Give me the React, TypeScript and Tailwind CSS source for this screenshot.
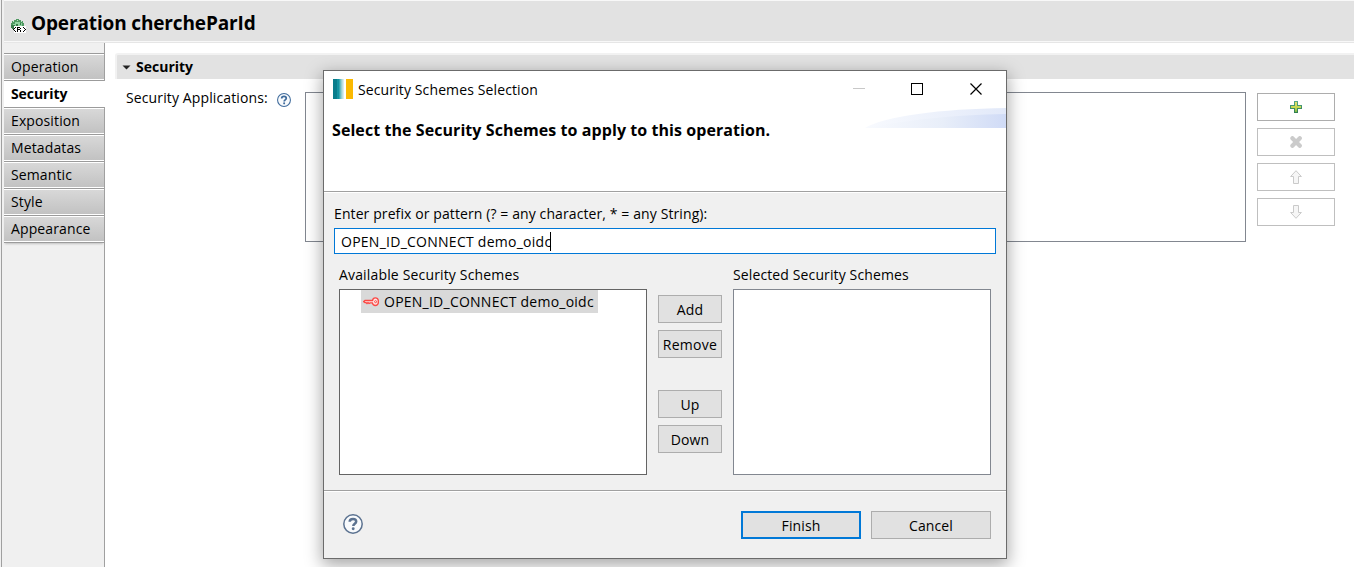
import React from "react";

const tabs = ["Operation", "Security", "Exposition", "Metadatas", "Semantic", "Style", "Appearance"];

function OperationIcon() {
  return (
    <svg width="15" height="15" viewBox="0 0 15 15" shapeRendering="crispEdges" className="block">
      <path d="M5 0h3v1h2v1h2v2h1v3h1v2H0V7H0V4h1V2h2V1h2z" fill="#4f9a62" />
      <path d="M4 3h5v1h2v3H2V5h2z" fill="#8fd3a0" />
      <path d="M0 6h4v5H2v-1H1V9H0zM5 5h2v2H5zM9 4h1v2H9z" fill="#3a7d4c" />
      <path d="M2 2h1v1H2zM6 1h1v1H6zM10 2h1v1h-1z" fill="#bfe5c8" />
      <path d="M3 7h12v7H3z" fill="#fff" />
      <path d="M4 8h1v1H4zM3 9h1v1H3zM2 10h1v1H2zM3 11h1v1H3zM4 12h1v1H4z" fill="#000" />
      <path d="M12 8h1v1h-1zM13 9h1v1h-1zM14 10h1v1h-1zM13 11h1v1h-1zM12 12h1v1h-1z" fill="#000" />
      <path d="M6 8h3v1H6zM6 8h1v5H6zM9 9h1v1H9zM7 10h2v1H7zM9 11h1v2H9z" fill="#000" />
    </svg>
  );
}

function HelpIcon({ size, color }: { size: number; color: string }) {
  return (
    <svg width={size} height={size} viewBox="0 0 20 20" className="block">
      <circle cx="10" cy="10" r="9.2" fill="#f8fafc" stroke={color} strokeWidth="1.5" />
      <path
        d="M6.7 7.7C6.7 5.7 8.1 4.9 10 4.9s3.2 1 3.2 2.700c0 2.300-2.900 2.200-2.900 4.500"
        fill="none"
        stroke={color}
        strokeWidth="2.5"
      />
      <circle cx="10.2" cy="14.800" r="1.450" fill={color} />
    </svg>
  );
}

function PlusIcon() {
  return (
    <svg width="12" height="12" viewBox="0 0 12 12" shapeRendering="crispEdges">
      <defs>
        <linearGradient id="plusEdge" x1="0" y1="0" x2="0" y2="1">
          <stop offset="0" stopColor="#55a98a" />
          <stop offset="1" stopColor="#2f7d4f" />
        </linearGradient>
        <linearGradient id="plusFill" x1="0" y1="0" x2="0" y2="1">
          <stop offset="0" stopColor="#e0e070" />
          <stop offset="0.55" stopColor="#c5d850" />
          <stop offset="1" stopColor="#7cb648" />
        </linearGradient>
      </defs>
      <path d="M4 0h4v4h4v4H8v4H4V8H0V4h4z" fill="url(#plusEdge)" />
      <path d="M5 1h2v4h4v2H7v4H5V7H1V5h4z" fill="url(#plusFill)" />
    </svg>
  );
}

function CrossIcon() {
  return (
    <svg width="12" height="12" viewBox="0 0 12 12">
      <path d="M2.400 2.200l7.400 7.600M9.800 2.200L2.400 9.800" stroke="#cbcbcb" strokeWidth="4.200" strokeLinecap="round" />
    </svg>
  );
}

function ArrowIcon({ down = false }: { down?: boolean }) {
  return (
    <svg width="12" height="14" viewBox="0 0 12 14" className={down ? "rotate-180" : ""}>
      <path d="M6 .7L11.400 6.500H8.500V13.500H3.500V6.500H.6z" fill="#f6f6f6" stroke="#cacaca" strokeWidth="1" />
    </svg>
  );
}

function KeyIcon() {
  return (
    <svg width="16" height="10" viewBox="0 0 16 10" className="block">
      <path
        d="M9.500 3.500H2L.7 4.600 2 5.600h1l1 .9 1-.9 1 .9 1.200-.6h2.100c.4 1.700 1.500 2.600 3 2.600 1.900 0 3.100-1.600 3.100-3.700S14.200 .9 12.300 .9c-1.500 0-2.500 1-2.800 2.600z"
        fill="#ffe3e3"
        stroke="#fb4844"
        strokeWidth="1.400"
      />
      <circle cx="12.600" cy="4.700" r="1" fill="#fff" stroke="#fb4844" strokeWidth="1" />
    </svg>
  );
}

function Logo() {
  return (
    <div className="flex h-5 w-5 overflow-hidden">
      <div className="w-1 bg-[#097d8c]" />
      <div className="w-0.5 bg-[#1493a1]" />
      <div className="w-px bg-[#3ba7b2]" />
      <div className="w-px bg-[#6bbcc4]" />
      <div className="w-px bg-[#97cfd4]" />
      <div className="w-px bg-[#badfe2]" />
      <div className="w-px bg-[#d8edee]" />
      <div className="w-0.5 bg-white" />
      <div className="w-[7px] bg-[#fbb900]" />
    </div>
  );
}

function Tab({ label, active, joined }: { label: string; active: boolean; joined: boolean }) {
  if (active) {
    return (
      <div className="h-[26px] w-[101px] bg-white pl-[7px] font-bold leading-[26px] tracking-[-0.1px] [word-spacing:0]">
        {label}
      </div>
    );
  }
  return (
    <div className={"h-7 border-y border-[#9b9b9b] " + (joined ? "-mt-px" : "")}>
      <div className="h-full border-y border-white bg-linear-to-b from-[#d8d8d8] to-[#c2c2c2] pl-[7px] leading-[23px]">
        {label}
      </div>
    </div>
  );
}

function SideButton({ children, muted }: { children: React.ReactNode; muted?: boolean }) {
  return (
    <button
      className={
        "flex h-7 w-[78px] items-center justify-center border bg-white " +
        (muted ? "border-[#bfbfbf]" : "border-[#adadad]")
      }
    >
      {children}
    </button>
  );
}

function Button({ children, className }: { children: React.ReactNode; className: string }) {
  return (
    <button className={"flex h-7 items-center justify-center bg-[#e1e1e1] pt-px whitespace-nowrap " + className}>
      {children}
    </button>
  );
}

function Dialog() {
  return (
    <div className="absolute left-[323px] top-[70px] flex h-[489px] w-[684px] flex-col border border-[#6b6b6b] bg-[#f0f0f0] shadow-[0_5px_16px_1px_rgba(0,0,0,0.35)]">
      <div className="relative h-[120px] bg-white">
        <svg width="141" height="20" viewBox="0 0 141 20" className="absolute right-0 top-[37px]">
          <defs>
            <linearGradient id="swooshBack" x1="0" x2="1">
              <stop offset="0" stopColor="#f8fafe" />
              <stop offset="1" stopColor="#e2e9f9" />
            </linearGradient>
            <linearGradient id="swooshFront" x1="0" x2="1">
              <stop offset="0" stopColor="#f8fafe" />
              <stop offset="0.55" stopColor="#e8eef9" />
              <stop offset="1" stopColor="#d0dbf6" />
            </linearGradient>
          </defs>
          <path d="M0 20C20 8 75 1 141 0V20z" fill="url(#swooshBack)" />
          <path d="M0 20C45 12 85 7 141 6V20z" fill="url(#swooshFront)" />
        </svg>
        <div className="flex h-9 items-center pl-[9px]">
          <Logo />
          <span className="ml-[5px] w-[180px] whitespace-nowrap">Security Schemes Selection</span>
          <svg width="130" height="12" viewBox="0 0 130 12" className="ml-auto mr-[23px]" shapeRendering="crispEdges">
            <path d="M0 5.500h12" stroke="#c8c8c8" />
            <path d="M58.500 .5h11v11h-11z" fill="none" stroke="#000" />
            <path d="M117.500 .5l11 11M128.500 .5l-11 11" stroke="#000" strokeWidth="1.200" shapeRendering="auto" />
          </svg>
        </div>
        <h2 className="pl-2 pt-[11px] text-[16px] font-bold leading-6 tracking-[0.07px] whitespace-nowrap">
          Select the Security Schemes to apply to this operation.
        </h2>
      </div>
      <div className="flex h-[299px] shrink-0 flex-col border-t border-[#a0a0a0] px-[10px]">
        <div className="-mx-[10px] h-px shrink-0 bg-white" />
        <label className="pt-[11px] leading-5 tracking-[0.1px]">
          Enter prefix or pattern (? = any character, * = any String):
        </label>
        <div className="mt-[4px] flex h-[26px] shrink-0 items-center border border-[#0078d7] bg-white pl-[6px]">
          <span className="tracking-[0.26px]">OPEN_ID_CONNECT demo_oidc</span>
          <span className="-ml-px h-[19px] w-px bg-black" />
        </div>
        <div className="flex px-[5px] pt-[11px]">
          <div className="w-[308px]">
            <div className="leading-5 tracking-[0.16px]">Available Security Schemes</div>
            <div className="mt-[4px] h-[186px] border border-[#646464] bg-white pl-[21px]">
              <div className="flex h-[23px] w-[237px] items-center bg-[#d9d9d9] pl-[2px]">
                <KeyIcon />
                <span className="ml-[5px] tracking-[0.24px] whitespace-nowrap">OPEN_ID_CONNECT demo_oidc</span>
              </div>
            </div>
          </div>
          <div className="ml-[11px] flex w-16 flex-col gap-[7px] pt-[30px]">
            <Button className="border border-[#adadad]">Add</Button>
            <Button className="border border-[#adadad] tracking-[0.3px]">Remove</Button>
            <Button className="mt-[25px] border border-[#adadad]">Up</Button>
            <Button className="border border-[#adadad]">Down</Button>
          </div>
          <div className="ml-[11px] w-[258px]">
            <div className="leading-5">Selected Security Schemes</div>
            <div className="mt-[4px] h-[186px] border border-[#828790] bg-white" />
          </div>
        </div>
      </div>
      <div className="flex grow flex-col border-t border-[#a0a0a0]">
        <div className="h-px bg-white" />
        <div className="flex pl-[19px] pr-[15px] pt-[19px]">
          <div className="pt-[3px]">
            <HelpIcon size={20} color="#5b7290" />
          </div>
          <Button className="ml-auto w-[120px] border-2 border-[#0078d7]">Finish</Button>
          <Button className="ml-[10px] w-[120px] border border-[#adadad]">Cancel</Button>
        </div>
      </div>
    </div>
  );
}

export default function App() {
  return (
    <div className="relative flex h-[567px] w-[1354px] overflow-hidden bg-[#f0f0f0] font-['Open_Sans','Noto_Sans',sans-serif] text-[14px] tracking-[0.12px] text-black">
      <div className="mr-0.5 w-0.5 shrink-0 border-r border-[#a0a0a0]" />
      <div className="flex w-[1350px] flex-col">
        <header className="flex h-[42px] items-center border-y border-[#f8f8f8] bg-[#e2e2e2] pl-[7px]">
          <div className="mt-[11px]">
            <OperationIcon />
          </div>
          <h1 className="ml-[5px] pt-[4px] text-[19px] font-bold leading-7 tracking-[-0.14px] whitespace-nowrap">
            Operation chercheParId
          </h1>
        </header>
        <div className="h-px shrink-0 bg-[#e6e6e6]" />
        <div className="flex grow">
          <nav className="w-[101px] shrink-0 border-r border-[#a0a0a0] pt-[10px]">
            <div className="[&>*:last-child]:shadow-[0_2px_2px_-1px_rgba(0,0,0,0.2)]">
              {tabs.map((label, i) => (
                <Tab key={label} label={label} active={i === 1} joined={i > 2} />
              ))}
            </div>
          </nav>
          <main className="grow bg-white pl-[10px] pt-[10px]">
            <div className="flex h-[26px] items-center rounded-tl-[3px] border-l-2 border-t-2 border-[#f2f2f2] bg-[#e2e2e2] pl-[5px]">
              <svg width="9" height="5" viewBox="0 0 9 5">
                <path d="M.5 .5h8l-4 4z" fill="#222" />
              </svg>
              <span className="ml-[5px] pb-[2px] font-bold tracking-normal">Security</span>
            </div>
            <div className="flex pl-[11px] pt-[13px]">
              <div className="flex w-[179px]">
                <span className="-mt-[4px] w-[151px] leading-5 whitespace-nowrap">Security Applications:</span>
                <div className="pt-px">
                  <HelpIcon size={14} color="#3f6b9c" />
                </div>
              </div>
              <div className="h-[150px] w-[941px] border border-[#828790] bg-white" />
              <div className="ml-[11px] flex flex-col gap-[7px] pt-px">
                <SideButton>
                  <PlusIcon />
                </SideButton>
                <SideButton muted>
                  <CrossIcon />
                </SideButton>
                <SideButton muted>
                  <ArrowIcon />
                </SideButton>
                <SideButton muted>
                  <ArrowIcon down />
                </SideButton>
              </div>
            </div>
          </main>
        </div>
      </div>
      <Dialog />
    </div>
  );
}
